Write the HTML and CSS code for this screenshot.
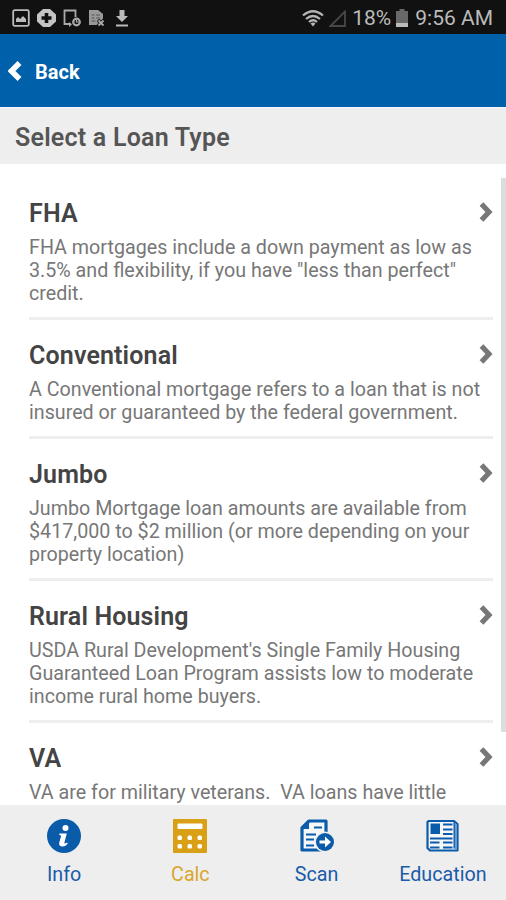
FILE: index.html
```html
<!DOCTYPE html>
<html lang="en">
<head>
    <meta charset="UTF-8">
    <meta name="viewport" content="width=device-width, initial-scale=1.0">
    <title>Select a Loan Type</title>
    <link rel="stylesheet" href="styles.css">
</head>
<body>
    <div class="app">
        <div class="status-bar">
            <div class="status-left">
                <svg width="18" height="18" viewBox="0 0 18 18"><rect x="1.2" y="1.2" width="15.6" height="15.6" rx="1.5" fill="none" stroke="#bbb" stroke-width="1.8"/><path d="M4 13V10l2-2 2 2 3-3 3 3v3z" fill="#bbb"/></svg>
                <svg width="19" height="18" viewBox="0 0 19 18"><path d="M6 0h7l6 5.500v7L13 18H6L0 12.500v-7z" fill="#c4c4c4"/><path d="M9.500 4v10M4.500 9h10" stroke="#111" stroke-width="3.600"/></svg>
                <svg width="18" height="18" viewBox="0 0 18 18"><path d="M8 15H1.500V1.500h11V8" fill="none" stroke="#aaa" stroke-width="1.800"/><path d="M6 13l3 2.500-3 2.500z" fill="#aaa"/><circle cx="13.500" cy="13" r="3.300" fill="none" stroke="#aaa" stroke-width="2.200"/><path d="M13.500 11v2h2" fill="none" stroke="#aaa" stroke-width="1.200"/></svg>
                <svg width="18" height="18" viewBox="0 0 18 18"><path d="M1 1h9l5 4v6l-5 5H1z" fill="#999"/><path d="M3.500 6h3M8 6h4M3.500 9h3M8 9h4M3.500 12h4" stroke="#555" stroke-width="1.200"/><path d="M10 11l6 6M16 11l-6 6" stroke="#111" stroke-width="3.500"/><path d="M10.500 11.500l5 5M15.500 11.500l-5 5" stroke="#aaa" stroke-width="1.800"/></svg>
                <svg class="download" width="14" height="17" viewBox="0 0 14 17"><path d="M4.500 0h5v6H13l-6 6-6-6h3.500zM1 14.500h12v2H1z" fill="#bbb"/></svg>
            </div>
            <div class="status-right">
                <svg class="wifi" width="22" height="17" viewBox="0 0 22 17"><path d="M1 5.500Q11-3 21 5.500M4 9Q11 3 18 9M7 12Q11 8.500 15 12" fill="none" stroke="#b5b5b5" stroke-width="2.200"/><path d="M8.500 13.500Q11 11.500 13.500 13.500L11 16.500z" fill="#b5b5b5"/></svg>
                <svg class="signal" width="17" height="17" viewBox="0 0 17 17"><path d="M16 1.500V16H1.500z" fill="none" stroke="#484848" stroke-width="1.800"/></svg>
                <span class="percent">18%</span>
                <svg class="battery" width="12" height="18" viewBox="0 0 12 18"><path d="M3.500 0h5v2H12v16H0V2h3.500z" fill="#686868"/><path d="M0 14h12v4H0z" fill="#bbb"/></svg>
                <span class="time">9:56 AM</span>
            </div>
        </div>

        <div class="header">
            <svg width="14" height="20" viewBox="0 0 14 20"><path d="M11.500 2L3.500 10l8 8" fill="none" stroke="#fff" stroke-width="5.500"/></svg>
            <span class="back">Back</span>
        </div>

        <h1 class="page-title">Select a Loan Type</h1>

        <div class="content">
            <div class="loan-list">
                <div class="loan">
                    <div class="loan-head">
                        <h2>FHA</h2>
                        <svg width="14" height="20" viewBox="0 0 14 20"><path d="M2.500 2l7.500 8-7.500 8" fill="none" stroke="#777" stroke-width="5.200"/></svg>
                    </div>
                    <p>FHA mortgages include a down payment as low as<br>3.5% and flexibility, if you have "less than perfect"<br>credit.</p>
                </div>
                <div class="loan">
                    <div class="loan-head">
                        <h2>Conventional</h2>
                        <svg width="14" height="20" viewBox="0 0 14 20"><path d="M2.500 2l7.500 8-7.500 8" fill="none" stroke="#777" stroke-width="5.200"/></svg>
                    </div>
                    <p>A Conventional mortgage refers to a loan that is not<br>insured or guaranteed by the federal government.</p>
                </div>
                <div class="loan">
                    <div class="loan-head">
                        <h2>Jumbo</h2>
                        <svg width="14" height="20" viewBox="0 0 14 20"><path d="M2.500 2l7.500 8-7.500 8" fill="none" stroke="#777" stroke-width="5.200"/></svg>
                    </div>
                    <p>Jumbo Mortgage loan amounts are available from<br>$417,000 to $2 million (or more depending on your<br>property location)</p>
                </div>
                <div class="loan">
                    <div class="loan-head">
                        <h2>Rural Housing</h2>
                        <svg width="14" height="20" viewBox="0 0 14 20"><path d="M2.500 2l7.500 8-7.500 8" fill="none" stroke="#777" stroke-width="5.200"/></svg>
                    </div>
                    <p>USDA Rural Development's Single Family Housing<br>Guaranteed Loan Program assists low to moderate<br>income rural home buyers.</p>
                </div>
                <div class="loan">
                    <div class="loan-head">
                        <h2>VA</h2>
                        <svg width="14" height="20" viewBox="0 0 14 20"><path d="M2.500 2l7.500 8-7.500 8" fill="none" stroke="#777" stroke-width="5.200"/></svg>
                    </div>
                    <p>VA are for military veterans.&nbsp; VA loans have little</p>
                </div>
            </div>
            <div class="scrollbar"></div>
        </div>

        <div class="tabs">
            <div class="tab">
                <svg width="34" height="34" viewBox="0 0 34 34"><circle cx="17" cy="17" r="17" fill="#0a5cab"/><circle cx="18.500" cy="9" r="3" fill="#fff"/><path d="M12.500 14.500h7.300l-2.500 9.500q.5 1 2.700-.5l.8 1q-2.500 3.500-6 3-3.300-.5-2.500-4l1.800-6.500q-.4-1-1.900-.9z" fill="#fff"/></svg>
                <span>Info</span>
            </div>
            <div class="tab active">
                <svg width="34" height="34" viewBox="0 0 34 34"><rect width="34" height="34" rx="1" fill="#d9a016"/><rect x="4.500" y="4.500" width="25" height="5.500" rx="1" fill="#fff"/><g fill="#fff"><rect x="4.500" y="16.500" width="4.500" height="4.500" rx="1.500"/><rect x="14.500" y="16.500" width="4.500" height="4.500" rx="1.500"/><rect x="24.500" y="16.500" width="4.500" height="4.500" rx="1.500"/><rect x="4.500" y="25" width="4.500" height="4.500" rx="1.500"/><rect x="14.500" y="25" width="4.500" height="4.500" rx="1.500"/><rect x="24.500" y="25" width="4.500" height="4.500" rx="1.500"/></g></svg>
                <span>Calc</span>
            </div>
            <div class="tab">
                <svg width="34" height="34" viewBox="0 0 34 34"><path d="M9 2h17v29H2V9z" fill="#f4f6fa" stroke="#0a5cab" stroke-width="3.200" stroke-linejoin="round"/><path d="M9 1.500V10H1.500z" fill="#0a5cab"/><path d="M14 8.500h8M6 15.500h10M6 20.500h8M6 26.500h8" stroke="#0a5cab" stroke-width="2"/><circle cx="25" cy="23" r="10.500" fill="#eee"/><circle cx="25" cy="23" r="9" fill="#0a5cab"/><path d="M19.500 21.500H25v-4l6 5.500-6 5.500v-4h-5.500z" fill="#fff"/></svg>
                <span>Scan</span>
            </div>
            <div class="tab">
                <svg width="34" height="34" viewBox="0 0 34 34"><path d="M2.500 2H28l3.500 3v26.500H4L1.500 29V3z" fill="#f4f6fa" stroke="#0a5cab" stroke-width="2.200" stroke-linejoin="round"/><path d="M28.500 4v25.500l2.500 1.500V6z" fill="#6c9bcb"/><path d="M28.200 3v26.500" stroke="#0a5cab" stroke-width="1.400"/><rect x="4.500" y="4.500" width="9.500" height="10.500" fill="#0a5cab"/><path d="M17 5.500h9.500M17 10.500h9.500M17 15h9.500M4 19.500h22.500M4 23.500h9.500M17 23.500h9.500M4 28.500h9.500M17 28.500h9.500" stroke="#0a5cab" stroke-width="2"/></svg>
                <span>Education</span>
            </div>
        </div>
    </div>
</body>
</html>
```
FILE: styles.css
```css
* {
    box-sizing: border-box;
}
body {
    margin: 0;
    font-family: Roboto, Arial, sans-serif;
    background: #fff;
}
.app {
    width: 506px;
    height: 900px;
    display: flex;
    flex-direction: column;
    overflow: hidden;
}
svg {
    display: block;
    flex-shrink: 0;
}
.status-bar {
    height: 34px;
    flex-shrink: 0;
    display: flex;
    align-items: center;
    justify-content: space-between;
    padding: 2px 13px 0 12px;
    background: #111;
    color: #bbb;
}
.status-left {
    display: flex;
    align-items: center;
    gap: 7px;
}
.download {
    margin-left: 2px;
}
.status-right {
    display: flex;
    align-items: center;
    font-size: 21px;
    white-space: nowrap;
}
.signal {
    margin: 1px 6px 0 5px;
}
.battery {
    margin: 0 7px 0 5px;
}
.header {
    height: 73px;
    flex-shrink: 0;
    display: flex;
    align-items: center;
    gap: 13px;
    padding: 1px 0 0 8px;
    background: #0060a9;
    color: #fff;
}
.back {
    padding-top: 1px;
    font-size: 20px;
    font-weight: bold;
}
.page-title {
    height: 57px;
    flex-shrink: 0;
    margin: 0;
    padding: 2px 15px 0;
    border-top: 1px solid #f8f8ff;
    background: #eee;
    color: #555;
    font-size: 25px;
    font-weight: 600;
    letter-spacing: 0.22px;
    line-height: 56px;
}
.content {
    flex: 1;
    min-height: 0;
    display: flex;
    padding-top: 14px;
    overflow: hidden;
}
.loan-list {
    flex: 1;
    padding: 0 8px 0 29px;
}
.loan {
    padding: 20px 0 12.500px;
    border-bottom: 3px solid #eee;
}
.loan-head {
    display: flex;
    align-items: center;
    justify-content: space-between;
    height: 30px;
    margin-bottom: 7.500px;
}
.loan-head svg {
    margin-bottom: 2px;
}
.loan h2 {
    margin: 0;
    color: #444;
    font-size: 25px;
    font-weight: 600;
    letter-spacing: 0.14px;
}
.loan p {
    margin: 0;
    color: #777;
    font-size: 19.700px;
    line-height: 23px;
    white-space: nowrap;
}
.scrollbar {
    width: 5px;
    height: 554px;
    background: #ddd;
}
.tabs {
    height: 95px;
    flex-shrink: 0;
    display: flex;
    padding-left: 1px;
    background: #eee;
    color: #1a5ba8;
}
.tab {
    flex: 1;
    display: flex;
    flex-direction: column;
    align-items: center;
    padding-top: 14px;
    font-size: 19.700px;
}
.tab span {
    margin-top: 10px;
    line-height: 24px;
}
.active {
    color: #d9a62c;
}
```
